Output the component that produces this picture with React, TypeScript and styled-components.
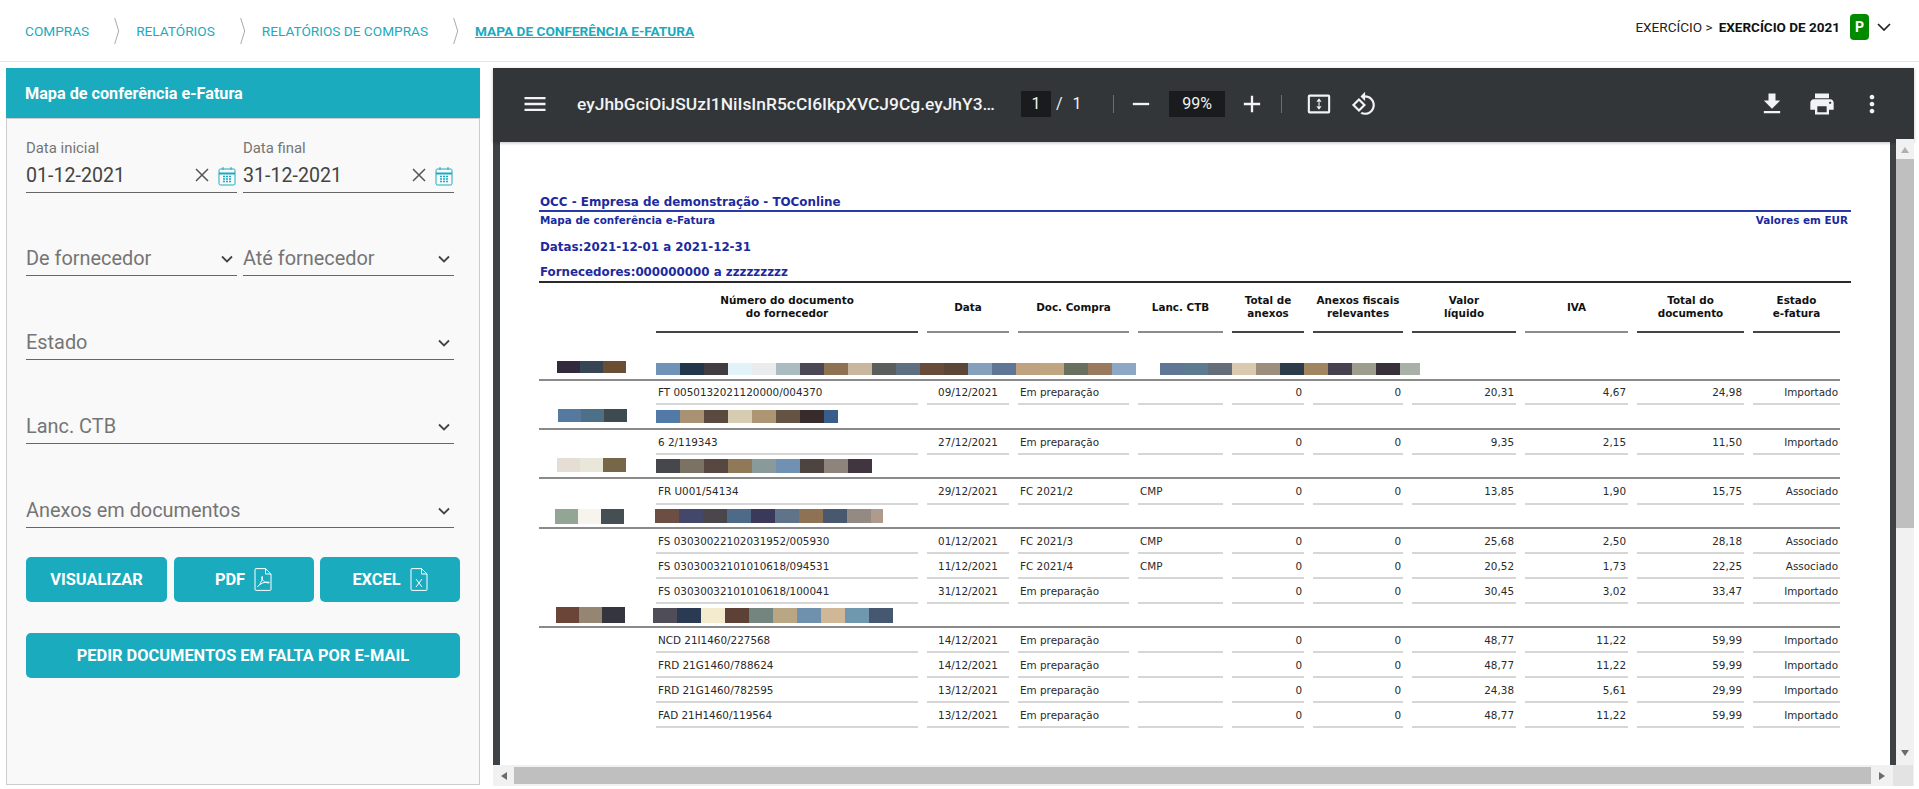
import React from "react";
import styled, { createGlobalStyle } from "styled-components";

const TEAL = "#1aabbe";
const BLUE = "#1c2a9e";

const Global = createGlobalStyle`
  html, body { margin: 0; padding: 0; background: #fff; height: 789px; overflow: hidden; }
  body { font-family: Roboto, "Liberation Sans", sans-serif; }
  * { box-sizing: border-box; }
`;

const Screen = styled.div`
  width: 1919px;
  height: 789px;
  display: flex;
  flex-direction: column;
  overflow: hidden;
`;

const TopBar = styled.header`
  height: 62px;
  flex: none;
  display: flex;
  align-items: center;
  justify-content: space-between;
  padding: 0 20px 0 25px;
  border-bottom: 1px solid #e6e6e6;
`;

const Crumbs = styled.nav`
  display: flex;
  align-items: center;
  font-size: 13.65px;
  color: ${TEAL};
`;

const Crumb = styled.span<{ $active?: boolean }>`
  font-weight: ${(p) => (p.$active ? 700 : 400)};
  text-decoration: ${(p) => (p.$active ? "underline" : "none")};
`;

const CrumbArrow = styled.svg`
  width: 6px;
  height: 28px;
  margin: 0 17px 0 24px;
  flex: none;
`;

const Exercise = styled.div`
  display: flex;
  align-items: center;
  font-size: 13.6px;
  color: #222;
  margin-top: -7px;
  b { font-weight: 700; font-size: 13.5px; color: #111; margin-left: 6px; }
`;

const StatusBadge = styled.span`
  width: 19px;
  height: 26px;
  margin-left: 10px;
  background: #008a00;
  border-radius: 4px;
  color: #fff;
  font-weight: 700;
  font-size: 14px;
  display: flex;
  align-items: center;
  justify-content: center;
`;

const Main = styled.main`
  flex: 1;
  display: flex;
  align-items: flex-start;
  padding: 6px 5px 0 6px;
  gap: 13px;
`;

const Panel = styled.section`
  width: 474px;
  height: 717px;
  flex: none;
  display: flex;
  flex-direction: column;
`;

const PanelTitle = styled.h2`
  margin: 0;
  height: 50px;
  flex: none;
  background: ${TEAL};
  color: #fff;
  font-size: 16.2px;
  font-weight: 700;
  padding-left: 19px;
  display: flex;
  align-items: center;
`;

const PanelBody = styled.div`
  flex: 1;
  background: #f9f9f9;
  border: 1px solid #cccccc;
  padding: 20px 12px 0 19px;
  display: flex;
  flex-direction: column;
`;

const FieldRow = styled.div`
  display: grid;
  grid-template-columns: 211px 211px;
  column-gap: 6px;
`;

const FieldLabel = styled.div`
  height: 18px;
  font-size: 14.9px;
  line-height: 18px;
  color: #757575;
`;

const DateValue = styled.div`
  height: 36px;
  padding-top: 1px;
  display: flex;
  align-items: center;
  border-bottom: 1px solid #666;
  font-size: 19.6px;
  color: #444;
`;

const DateText = styled.span`
  flex: 1;
`;

const ClearIcon = styled.svg`
  width: 14px;
  height: 14px;
  margin-right: 9px;
`;

const CalendarIcon = styled.svg`
  width: 18px;
  height: 20px;
  margin-right: 1px;
  margin-top: 2px;
`;

const SelectBox = styled.div<{ $top: number; $wide?: boolean }>`
  width: ${(p) => (p.$wide ? "428px" : "auto")};
  height: 35px;
  margin-top: ${(p) => p.$top}px;
  padding: 1px 4px 0 0;
  display: flex;
  align-items: center;
  justify-content: space-between;
  border-bottom: 1px solid #666;
  color: #757575;
`;

const SelectText = styled.span`
  font-size: 19.9px;
`;

const Chevron = styled.svg<{ $w?: number }>`
  width: ${(p) => p.$w ?? 12}px;
  height: 8px;
  flex: none;
`;

const ButtonRow = styled.div`
  display: grid;
  grid-template-columns: 141px 140px 140px;
  column-gap: 6.5px;
  margin-top: 29px;
  width: 434px;
`;

const ActionButton = styled.button<{ $top?: number; $w?: number }>`
  width: ${(p) => (p.$w ? `${p.$w}px` : "auto")};
  height: 45px;
  margin-top: ${(p) => p.$top ?? 0}px;
  border: 0;
  border-radius: 5px;
  background: ${TEAL};
  color: #fff;
  font-family: Roboto, sans-serif;
  font-size: 16.4px;
  font-weight: 700;
  display: flex;
  align-items: center;
  justify-content: center;
  gap: 9px;
  padding: 0;
`;

const FileIcon = styled.svg`
  width: 18px;
  height: 23px;
`;

const Viewer = styled.section`
  width: 1421px;
  height: 718px;
  flex: none;
  display: flex;
  flex-direction: column;
  background: #3f4245;
`;

const ToolBar = styled.div`
  height: 74px;
  flex: none;
  background: #323639;
  display: flex;
  align-items: center;
  padding: 0 17px 3px 22px;
  color: #f1f3f4;
  position: relative;
  z-index: 1;
  box-shadow: 0 1px 3px rgba(0, 0, 0, 0.25);
`;

const ToolSlot = styled.span<{ $w?: number; $left?: number }>`
  width: ${(p) => p.$w ?? 40}px;
  height: 40px;
  margin-left: ${(p) => p.$left ?? 0}px;
  flex: none;
  display: flex;
  align-items: center;
  justify-content: center;
`;

const ToolIcon = styled.svg<{ $size?: number }>`
  width: ${(p) => p.$size ?? 28}px;
  height: ${(p) => p.$size ?? 28}px;
  fill: #f1f3f4;
`;

const FileName = styled.span`
  width: 424px;
  margin-left: 22px;
  flex: none;
  font-size: 17.4px;
  font-weight: 500;
  white-space: nowrap;
`;

const ValueBox = styled.span<{ $w: number; $left: number }>`
  width: ${(p) => p.$w}px;
  height: 26px;
  margin-left: ${(p) => p.$left}px;
  flex: none;
  background: #191b1c;
  font-size: 16px;
  display: flex;
  align-items: center;
  justify-content: center;
`;

const PageInfo = styled.span`
  width: 62px;
  flex: none;
  font-size: 16px;
  padding-left: 5px;
  word-spacing: 6px;
`;

const ToolSeparator = styled.span<{ $left?: number }>`
  width: 1px;
  height: 18px;
  margin-left: ${(p) => p.$left ?? 0}px;
  flex: none;
  background: #6b6e70;
`;

const ToolSpacer = styled.span`
  flex: 1;
`;

const ViewerBody = styled.div`
  flex: 1;
  min-height: 0;
  margin-top: -3px;
  display: flex;
`;

const PageWell = styled.div`
  flex: 1;
  min-width: 0;
  padding: 3px 6px 0 7px;
`;

const Page = styled.div`
  height: 100%;
  background: #fff;
  overflow: hidden;
  padding: 52px 0 0 39px;
  font-family: "DejaVu Sans", sans-serif;
`;

const VBar = styled.div`
  width: 18px;
  flex: none;
  background: #f1f1f1;
  position: relative;
  z-index: 2;
  display: flex;
  flex-direction: column;
  align-items: center;
  padding-top: 20px;
`;

const VThumb = styled.div`
  width: 18px;
  height: 369px;
  background: #bfbfbf;
`;

const ScrollArrow = styled.svg<{ $left?: number }>`
  width: 10px;
  height: 10px;
  flex: none;
  margin-left: ${(p) => p.$left ?? 0}px;
  fill: #6b6b6b;
`;

const VArrowUp = styled(ScrollArrow)`
  position: absolute;
  top: 6px;
  fill: #b0b0b0;
`;

const VArrowDown = styled(ScrollArrow)`
  position: absolute;
  bottom: 7px;
`;

const HBar = styled.div`
  height: 21px;
  flex: none;
  background: #f1f1f1;
  display: flex;
  align-items: center;
`;

const HThumb = styled.div`
  width: 1357px;
  height: 17px;
  margin: 0 6px 0 5px;
  background: #bfbfbf;
`;

const HCorner = styled.div`
  width: 20px;
  height: 21px;
  margin-left: 6px;
  background: #e3e3e3;
`;

const ReportTitle = styled.div`
  width: 1312px;
  height: 18px;
  border-bottom: 2px solid #2b39a8;
  color: ${BLUE};
  font-size: 11.9px;
  font-weight: 700;
  line-height: 16px;
  padding-left: 1px;
`;

const ReportSub = styled.div`
  width: 1309px;
  height: 16px;
  display: flex;
  justify-content: space-between;
  color: ${BLUE};
  font-size: 10.4px;
  font-weight: 700;
  line-height: 16px;
  padding-left: 1px;
`;

const ReportMeta = styled.div<{ $top: number }>`
  height: 16px;
  margin-top: ${(p) => p.$top}px;
  color: ${BLUE};
  font-size: 11.85px;
  font-weight: 700;
  line-height: 16px;
  padding-left: 1px;
`;

const TopRule = styled.div`
  width: 1312px;
  height: 2px;
  margin-top: 1px;
  background: #2a2a2a;
`;

const COLUMNS = "262px 82px 111px 85px 72px 90px 104px 103px 107px 87px";

const Cols = styled.div`
  margin-left: 117px;
  width: 1184px;
  display: grid;
  grid-template-columns: ${COLUMNS};
  column-gap: 9px;
`;

const HeadRow = styled(Cols)`
  height: 50px;
`;

const HeadCell = styled.div<{ $strong?: boolean }>`
  border-bottom: 2px solid ${(p) => (p.$strong ? "#444" : "#8c8c8c")};
  display: flex;
  align-items: center;
  justify-content: center;
  text-align: center;
  font-size: 10.4px;
  font-weight: 700;
  line-height: 13px;
  color: #111;
  white-space: pre-line;
`;

const Row = styled(Cols)<{ $h: number }>`
  height: ${(p) => p.$h}px;
`;

const Cell = styled.div<{ $align?: string }>`
  border-bottom: 2px solid #d6d6d6;
  display: flex;
  align-items: center;
  justify-content: ${(p) => p.$align ?? "flex-start"};
  padding: 0 2px;
  font-size: 10.4px;
  color: #2a2a2a;
  white-space: nowrap;
`;

const Band = styled.div<{ $h: number; $pad: number }>`
  width: 1301px;
  height: ${(p) => p.$h}px;
  border-bottom: 2px solid #8a8a8a;
  padding-bottom: ${(p) => p.$pad}px;
  display: flex;
  align-items: flex-end;
`;

const BandLeft = styled.div<{ $pad: number; $lift: number }>`
  width: 117px;
  flex: none;
  padding-left: ${(p) => p.$pad}px;
  margin-bottom: ${(p) => p.$lift}px;
  display: flex;
`;

const BandRight = styled.div<{ $shift: number }>`
  margin-left: ${(p) => p.$shift}px;
  display: flex;
`;

const Swatch = styled.span<{ $c: string; $w?: number; $h: number }>`
  width: ${(p) => p.$w ?? 24}px;
  height: ${(p) => p.$h}px;
  flex: none;
  background: ${(p) => p.$c};
`;

const menuPath = "M3 18h18v-2H3v2zm0-5h18v-2H3v2zm0-7v2h18V6H3z";
const minusPath = "M19 13H5v-2h14v2z";
const plusPath = "M19 13h-6v6h-2v-6H5v-2h6V5h2v6h6v2z";
const fitPath =
  "M3.900 3.900h16.200a1.500 1.500 0 0 1 1.500 1.500v13.200a1.500 1.500 0 0 1-1.500 1.500H3.900a1.500 1.500 0 0 1-1.500-1.500V5.400a1.500 1.500 0 0 1 1.500-1.500zM4.200 5.700v12.600h15.600V5.700zM12 7l-2.200 3h4.400zM12 17l2.200-3H9.800zM11.500 10.500h1v3h-1z";
const rotatePath =
  "M7.34 6.41L.86 12.9l6.49 6.48 6.49-6.48-6.5-6.49zM3.69 12.9l3.66-3.66L11 12.9l-3.66 3.66-3.65-3.66zm15.67-6.26C17.61 4.88 15.3 4 13 4V.76L8.76 5 13 9.24V6c1.79 0 3.58.68 4.95 2.05 2.73 2.73 2.73 7.17 0 9.9C16.58 19.32 14.79 20 13 20c-.97 0-1.94-.21-2.84-.61l-1.49 1.49C10.02 21.62 11.51 22 13 22c2.3 0 4.61-.88 6.36-2.64 3.52-3.51 3.52-9.21 0-12.72z";
const downloadPath = "M19 9h-4V3H9v6H5l7 7 7-7zM5 18v2h14v-2H5z";
const printPath =
  "M19 8H5c-1.66 0-3 1.34-3 3v6h4v4h12v-4h4v-6c0-1.66-1.34-3-3-3zm-3 11H8v-5h8v5zm3-7c-.55 0-1-.45-1-1s.45-1 1-1 1 .45 1 1-.45 1-1 1zm-1-9H6v4h12V3z";
const morePath =
  "M12 8c1.1 0 2-.9 2-2s-.9-2-2-2-2 .9-2 2 .9 2 2 2zm0 2c-1.1 0-2 .9-2 2s.9 2 2 2 2-.9 2-2-.9-2-2-2zm0 6c-1.1 0-2 .9-2 2s.9 2 2 2 2-.9 2-2-.9-2-2-2z";

const Tool = ({ d, size }: { d: string; size?: number }) => (
  <ToolIcon viewBox="0 0 24 24" $size={size}>
    <path d={d} />
  </ToolIcon>
);

const ChevronDown = () => (
  <Chevron viewBox="0 0 12 8">
    <polyline points="1,1.5 6,6.5 11,1.5" fill="none" stroke="#444" strokeWidth="1.8" />
  </Chevron>
);

const Clear = () => (
  <ClearIcon viewBox="0 0 14 14">
    <path d="M1 1l12 12M13 1L1 13" stroke="#555" strokeWidth="1.5" fill="none" />
  </ClearIcon>
);

const Calendar = () => (
  <CalendarIcon viewBox="0 0 18 20" fill="none" stroke={TEAL} strokeWidth="1">
    <rect x="1" y="3" width="16" height="16" rx="1.5" />
    <path d="M1 7.5h16" strokeWidth="2" />
    <path d="M5 1v3M13 1v3" />
    <path d="M5 10.5h2M8 10.5h2M11 10.5h2M5 13h2M8 13h2M11 13h2M5 15.5h2M8 15.5h2M11 15.5h2" strokeWidth="1.6" />
  </CalendarIcon>
);

const FileOutline = () => (
  <path d="M2 .6h9.500L17 6v15.400a1 1 0 0 1-1 1H2a1 1 0 0 1-1-1V1.600a1 1 0 0 1 1-1zM11.500.6V6H17" />
);

const PdfIcon = () => (
  <FileIcon viewBox="0 0 18 23" fill="none" stroke="#fff" strokeWidth="1">
    <FileOutline />
    <path d="M3.500 18.500c2-1 4-4.500 5-9 .3-1.500-1-1.600-.8 0 .4 3 2.500 5 6.800 5.500 1.200.1 1.200-1-.2-1-4-.1-8 1.500-10.800 4.500z" />
  </FileIcon>
);

const ExcelIcon = () => (
  <FileIcon viewBox="0 0 18 23" fill="none" stroke="#fff" strokeWidth="1">
    <FileOutline />
    <path d="M6 11l6 8M12 11l-6 8" />
  </FileIcon>
);

type RowData = string[];
const row = (doc: string, date: string, buy: string, lanc: string, net: string, vat: string, total: string, st: string): RowData =>
  [doc, date, buy, lanc, "0", "0", net, vat, total, st];

const EP = "Em preparação";
const groups = [
  {
    h: 48, pad: 4, lp: 18, lift: 2, lh: 12, rh: 12, shift: 0,
    left: ["#32293c", "#374454", "#6b4d34"],
    right: [
      ["#6f94b7"], ["#23374a"], ["#413d42"], ["#e1f3f9"], ["#e9ebec"], ["#aabcbf"], ["#4a4854"], ["#8f7252"], ["#c9b69e"], ["#5a5e5c"],
      ["#5f6f82"], ["#684b39"], ["#5c4737"], ["#86a0bc"], ["#5f7696"], ["#bfa27f"], ["#bfa680"], ["#69705f"], ["#9a7a5f"], ["#8ca8c4"],
      ["#ffffff"], ["#5f7696"], ["#5c7a90"], ["#636e79"], ["#d9c9ae"], ["#9c8e7c"], ["#2b3b48"], ["#a08560"], ["#47404e"], ["#9c9d8c"],
      ["#38313a"], ["#a9b0a7", 20],
    ] as [string, number?][],
    rows: [{ h: 24, d: row("FT 0050132021120000/004370", "09/12/2021", EP, "", "20,31", "4,67", "24,98", "Importado") }],
  },
  {
    h: 25, pad: 5, lp: 19, lift: 1, lh: 13, rh: 13, shift: 0,
    left: ["#567a9f", "#4d7088", "#3d4a50"],
    right: [["#527aa6"], ["#a99173"], ["#5a493e"], ["#d5ccb2"], ["#ae9675"], ["#655344"], ["#372c2b"], ["#3a5d8a", 14]] as [string, number?][],
    rows: [{ h: 25, d: row("6 2/119343", "27/12/2021", EP, "", "9,35", "2,15", "11,50", "Importado") }],
  },
  {
    h: 24, pad: 4, lp: 18, lift: 1, lh: 14, rh: 14, shift: 0,
    left: ["#e6ddd5", "#e9e6da", "#766749"],
    right: [["#45474c"], ["#7b7263"], ["#564840"], ["#8f7959"], ["#8a9a9b"], ["#7191b2"], ["#4d443f"], ["#8e847c"], ["#41363f"]] as [string, number?][],
    rows: [{ h: 26, d: row("FR U001/54134", "29/12/2021", "FC 2021/2", "CMP", "13,85", "1,90", "15,75", "Associado") }],
  },
  {
    h: 24, pad: 4, lp: 16, lift: -1, lh: 15, rh: 14, shift: -1,
    left: ["#93a696", "#f6f4ec", "#454e52"],
    right: [["#6d4e42"], ["#43486a"], ["#4a464c"], ["#4d6a89"], ["#3a395c"], ["#5f7489"], ["#8f7153"], ["#47586f"], ["#938a83"], ["#af9b8e", 12]] as [string, number?][],
    rows: [
      { h: 25, d: row("FS 03030022102031952/005930", "01/12/2021", "FC 2021/3", "CMP", "25,68", "2,50", "28,18", "Associado") },
      { h: 25, d: row("FS 03030032101010618/094531", "11/12/2021", "FC 2021/4", "CMP", "20,52", "1,73", "22,25", "Associado") },
      { h: 25, d: row("FS 03030032101010618/100041", "31/12/2021", EP, "", "30,45", "3,02", "33,47", "Importado") },
    ],
  },
  {
    h: 24, pad: 3, lp: 17, lift: 0, lh: 16, rh: 15, shift: -3,
    left: ["#6b4537", "#958673", "#353540"],
    right: [["#4f4e58"], ["#293a52"], ["#f4ebcf"], ["#5d4137"], ["#748580"], ["#b9a685"], ["#7091ad"], ["#d0b798"], ["#6f97ae"], ["#465870"]] as [string, number?][],
    rows: [
      { h: 25, d: row("NCD 21I1460/227568", "14/12/2021", EP, "", "48,77", "11,22", "59,99", "Importado") },
      { h: 25, d: row("FRD 21G1460/788624", "14/12/2021", EP, "", "48,77", "11,22", "59,99", "Importado") },
      { h: 25, d: row("FRD 21G1460/782595", "13/12/2021", EP, "", "24,38", "5,61", "29,99", "Importado") },
      { h: 25, d: row("FAD 21H1460/119564", "13/12/2021", EP, "", "48,77", "11,22", "59,99", "Importado") },
    ],
  },
];

const headers: [string, boolean][] = [
  ["Número do documento\ndo fornecedor", true],
  ["Data", false],
  ["Doc. Compra", false],
  ["Lanc. CTB", false],
  ["Total de\nanexos", true],
  ["Anexos fiscais\nrelevantes", true],
  ["Valor\nlíquido", true],
  ["IVA", false],
  ["Total do\ndocumento", true],
  ["Estado\ne-fatura", true],
];

const ReportRow = ({ h, d }: { h: number; d: RowData }) => (
  <Row $h={h}>
    <Cell>{d[0]}</Cell>
    <Cell $align="center">{d[1]}</Cell>
    <Cell>{d[2]}</Cell>
    <Cell>{d[3]}</Cell>
    {d.slice(4).map((v, i) => (
      <Cell key={i} $align="flex-end">
        {v}
      </Cell>
    ))}
  </Row>
);

const Arrow = () => (
  <CrumbArrow viewBox="0 0 6 28">
    <polyline points="1.7,1 5.7,14 1.7,27" fill="none" stroke="#a9a9a9" strokeWidth="1" />
  </CrumbArrow>
);

export default function App() {
  return (
    <Screen>
      <Global />
      <TopBar>
        <Crumbs>
          <Crumb>COMPRAS</Crumb>
          <Arrow />
          <Crumb>RELATÓRIOS</Crumb>
          <Arrow />
          <Crumb>RELATÓRIOS DE COMPRAS</Crumb>
          <Arrow />
          <Crumb $active>MAPA DE CONFERÊNCIA E-FATURA</Crumb>
        </Crumbs>
        <Exercise>
          EXERCÍCIO &gt; <b>EXERCÍCIO DE 2021</b>
          <StatusBadge>P</StatusBadge>
          <ToolSlot $w={30}>
            <Chevron viewBox="0 0 14 8" $w={14}>
              <polyline points="1,1 7,7 13,1" fill="none" stroke="#222" strokeWidth="1.7" />
            </Chevron>
          </ToolSlot>
        </Exercise>
      </TopBar>
      <Main>
        <Panel>
          <PanelTitle>Mapa de conferência e-Fatura</PanelTitle>
          <PanelBody>
            <FieldRow>
              <div>
                <FieldLabel>Data inicial</FieldLabel>
                <DateValue>
                  <DateText>01-12-2021</DateText>
                  <Clear />
                  <Calendar />
                </DateValue>
              </div>
              <div>
                <FieldLabel>Data final</FieldLabel>
                <DateValue>
                  <DateText>31-12-2021</DateText>
                  <Clear />
                  <Calendar />
                </DateValue>
              </div>
            </FieldRow>
            <FieldRow>
              <SelectBox $top={48}>
                <SelectText>De fornecedor</SelectText>
                <ChevronDown />
              </SelectBox>
              <SelectBox $top={48}>
                <SelectText>Até fornecedor</SelectText>
                <ChevronDown />
              </SelectBox>
            </FieldRow>
            <SelectBox $top={49} $wide>
              <SelectText>Estado</SelectText>
              <ChevronDown />
            </SelectBox>
            <SelectBox $top={49} $wide>
              <SelectText>Lanc. CTB</SelectText>
              <ChevronDown />
            </SelectBox>
            <SelectBox $top={49} $wide>
              <SelectText>Anexos em documentos</SelectText>
              <ChevronDown />
            </SelectBox>
            <ButtonRow>
              <ActionButton>VISUALIZAR</ActionButton>
              <ActionButton>
                PDF
                <PdfIcon />
              </ActionButton>
              <ActionButton>
                EXCEL
                <ExcelIcon />
              </ActionButton>
            </ButtonRow>
            <ActionButton $top={31} $w={434}>
              PEDIR DOCUMENTOS EM FALTA POR E-MAIL
            </ActionButton>
          </PanelBody>
        </Panel>
        <Viewer>
          <ToolBar>
            <ToolSlot>
              <Tool d={menuPath} />
            </ToolSlot>
            <FileName>eyJhbGciOiJSUzI1NiIsInR5cCI6IkpXVCJ9Cg.eyJhY3…</FileName>
            <ValueBox $w={30} $left={20}>1</ValueBox>
            <PageInfo>/ 1</PageInfo>
            <ToolSeparator />
            <ToolSlot $left={7}>
              <Tool d={minusPath} />
            </ToolSlot>
            <ValueBox $w={56} $left={8}>99%</ValueBox>
            <ToolSlot $left={7}>
              <Tool d={plusPath} />
            </ToolSlot>
            <ToolSeparator $left={9} />
            <ToolSlot $left={17}>
              <Tool d={fitPath} />
            </ToolSlot>
            <ToolSlot $left={5}>
              <Tool d={rotatePath} size={26} />
            </ToolSlot>
            <ToolSpacer />
            <ToolSlot $w={50}>
              <Tool d={downloadPath} />
            </ToolSlot>
            <ToolSlot $w={50}>
              <Tool d={printPath} />
            </ToolSlot>
            <ToolSlot $w={50}>
              <Tool d={morePath} />
            </ToolSlot>
          </ToolBar>
          <ViewerBody>
            <PageWell>
              <Page>
                <ReportTitle>OCC - Empresa de demonstração - TOConline</ReportTitle>
                <ReportSub>
                  <span>Mapa de conferência e-Fatura</span>
                  <span>Valores em EUR</span>
                </ReportSub>
                <ReportMeta $top={11}>Datas:2021-12-01 a 2021-12-31</ReportMeta>
                <ReportMeta $top={9}>Fornecedores:000000000 a zzzzzzzzz</ReportMeta>
                <TopRule />
                <HeadRow>
                  {headers.map(([label, strong]) => (
                    <HeadCell key={label} $strong={strong}>
                      {label}
                    </HeadCell>
                  ))}
                </HeadRow>
                {groups.map((g, i) => (
                  <React.Fragment key={i}>
                    <Band $h={g.h} $pad={g.pad}>
                      <BandLeft $pad={g.lp} $lift={g.lift}>
                        {g.left.map((c, k) => (
                          <Swatch key={k} $c={c} $w={23} $h={g.lh} />
                        ))}
                      </BandLeft>
                      <BandRight $shift={g.shift}>
                        {g.right.map(([c, w], k) => (
                          <Swatch key={k} $c={c} $w={w} $h={g.rh} />
                        ))}
                      </BandRight>
                    </Band>
                    {g.rows.map((r, k) => (
                      <ReportRow key={k} h={r.h} d={r.d} />
                    ))}
                  </React.Fragment>
                ))}
              </Page>
            </PageWell>
            <VBar>
              <VArrowUp viewBox="0 0 10 10">
                <path d="M5 2l4 6H1z" />
              </VArrowUp>
              <VThumb />
              <VArrowDown viewBox="0 0 10 10">
                <path d="M5 8L1 2h8z" />
              </VArrowDown>
            </VBar>
          </ViewerBody>
          <HBar>
            <ScrollArrow viewBox="0 0 10 10" $left={6}>
              <path d="M2 5l6-4v8z" />
            </ScrollArrow>
            <HThumb />
            <ScrollArrow viewBox="0 0 10 10">
              <path d="M8 5L2 1v8z" />
            </ScrollArrow>
            <HCorner />
          </HBar>
        </Viewer>
      </Main>
    </Screen>
  );
}
